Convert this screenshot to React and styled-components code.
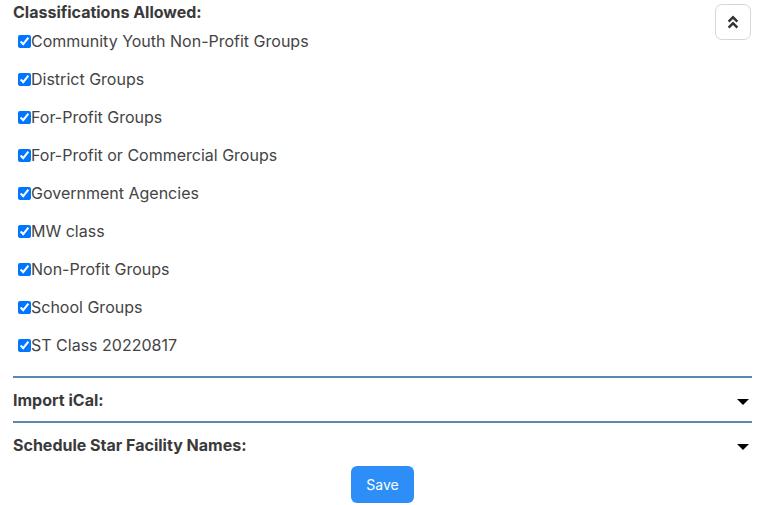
import React from "react";
import styled, { createGlobalStyle } from "styled-components";
import { FaAngleDoubleUp } from "react-icons/fa";

const GlobalStyle = createGlobalStyle`
  body {
    margin: 0;
    background: #ffffff;
    font-family: Inter, "Noto Sans", sans-serif;
    color: #3a3a3a;
  }
`;

const Page = styled.div`
  display: flex;
  flex-direction: column;
  padding: 0 13px;
`;

const Section = styled.section`
  position: relative;
  display: flex;
  flex-direction: column;
  padding-bottom: 12px;
  border-bottom: 2px solid #5e86b0;
`;

const Heading = styled.h3`
  margin: 0;
  font-size: 16px;
  font-weight: 700;
  line-height: 20px;
  color: #3a3a3a;
`;

const TopHeading = styled(Heading)`
  padding-top: 3px;
  line-height: 19px;
`;

const ToggleButton = styled.button`
  position: absolute;
  top: 4px;
  right: 1px;
  width: 36px;
  height: 36px;
  display: flex;
  align-items: center;
  justify-content: center;
  background: #fff;
  border: 1px solid #d6d6d6;
  border-radius: 7px;
  color: #333;
  padding: 0;
`;

const List = styled.div`
  display: flex;
  flex-direction: column;
  padding-left: 5px;
`;

const Item = styled.label`
  display: flex;
  align-items: center;
  height: 38px;
  font-size: 16px;
  color: #444;
`;

const Check = styled.input`
  width: 13px;
  height: 13px;
  margin: 0;
`;

const CollapseRow = styled.div`
  display: flex;
  align-items: center;
  justify-content: space-between;
  height: 43px;
  border-bottom: ${(p) => (p.$last ? "none" : "2px solid #5e86b0")};
`;

const Caret = styled.svg`
  width: 12px;
  height: 6px;
  margin: 4px 3px 0 0;
`;

const Footer = styled.div`
  display: flex;
  justify-content: center;
`;

const SaveButton = styled.button`
  width: 63px;
  height: 37px;
  border: none;
  border-radius: 6px;
  background: #2e8ef8;
  color: #fff;
  font-family: Inter, "Noto Sans", sans-serif;
  font-size: 14px;
`;

const classes = [
  "Community Youth Non-Profit Groups",
  "District Groups",
  "For-Profit Groups",
  "For-Profit or Commercial Groups",
  "Government Agencies",
  "MW class",
  "Non-Profit Groups",
  "School Groups",
  "ST Class 20220817",
];

function CaretDown() {
  return (
    <Caret viewBox="0 0 12 6">
      <polygon points="0,0 12,0 6,6" fill="#000" />
    </Caret>
  );
}

export default function App() {
  return (
    <Page>
      <GlobalStyle />
      <Section>
        <TopHeading>Classifications Allowed:</TopHeading>
        <ToggleButton>
          <FaAngleDoubleUp size={16} />
        </ToggleButton>
        <List>
          {classes.map((c) => (
            <Item key={c}>
              <Check type="checkbox" defaultChecked />
              {c}
            </Item>
          ))}
        </List>
      </Section>
      <CollapseRow>
        <Heading>Import iCal:</Heading>
        <CaretDown />
      </CollapseRow>
      <CollapseRow $last>
        <Heading>Schedule Star Facility Names:</Heading>
        <CaretDown />
      </CollapseRow>
      <Footer>
        <SaveButton>Save</SaveButton>
      </Footer>
    </Page>
  );
}
